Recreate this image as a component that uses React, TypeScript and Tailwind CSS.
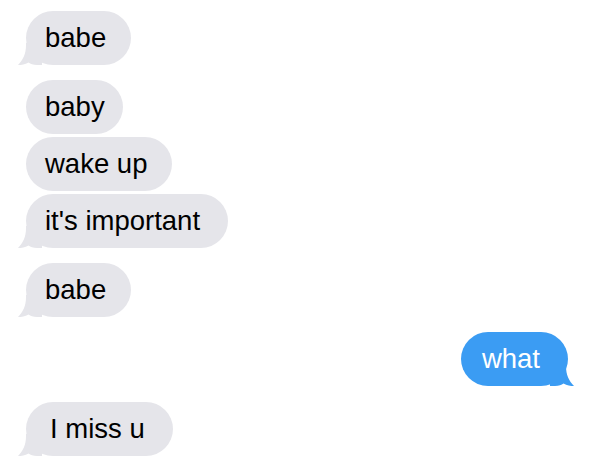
const font = { fontFamily: '"Liberation Sans", Arial, sans-serif' };

function Tail({ side, color }: { side: "left" | "right"; color: string }) {
  if (side === "left") {
    return (
      <svg className="absolute bottom-0 -left-[8px]" width="24" height="22" viewBox="0 0 24 22">
        <path
          d="M8 0 L24 0 L24 22 L19 22 C15 22 12.5 21 10.5 19.5 C7 21.5 3.5 22 0 22 C5 17 8 11 8 2 Z"
          fill={color}
        />
      </svg>
    );
  }
  return (
    <svg className="absolute bottom-0 -right-[6px]" width="24" height="22" viewBox="0 0 24 22">
      <path
        d="M16 0 L0 0 L0 22 L5 22 C9 22 11.5 21 13.5 19.5 C17 21.5 20.5 22 24 22 C19 17 16 11 16 2 Z"
        fill={color}
      />
    </svg>
  );
}

function Received({
  text,
  tail,
  className = "",
  pad = "pl-[19px] pr-[25px]",
}: {
  text: string;
  tail?: boolean;
  className?: string;
  pad?: string;
}) {
  return (
    <div className={`relative self-start ml-[26px] ${className}`}>
      <div className={`flex h-[54px] items-center rounded-[27px] bg-[#e5e5ea] text-[27.5px] text-black ${pad}`}>
        {text}
      </div>
      {tail && <Tail side="left" color="#e5e5ea" />}
    </div>
  );
}

function Sent({ text, className = "" }: { text: string; className?: string }) {
  return (
    <div className={`relative self-end mr-[22px] ${className}`}>
      <div className="flex h-[54px] items-center rounded-[27px] bg-[#3b9cf3] pl-[21px] pr-[28px] text-[27.5px] text-white">
        {text}
      </div>
      <Tail side="right" color="#3b9cf3" />
    </div>
  );
}

export default function App() {
  return (
    <div className="flex h-[461px] w-[590px] flex-col overflow-hidden bg-white pt-[11px]" style={font}>
      <Received text="babe" tail />
      <Received text="baby" className="mt-[15px]" pad="pl-[19px] pr-[18px]" />
      <Received text="wake up" className="mt-[3px]" />
      <Received text="it's important" tail className="mt-[3px]" pad="pl-[19px] pr-[28px]" />
      <Received text="babe" tail className="mt-[15px]" />
      <Sent text="what" className="mt-[15px]" />
      <Received text="I miss u" tail className="mt-[16px]" pad="pl-[24px] pr-[28px]" />
    </div>
  );
}
